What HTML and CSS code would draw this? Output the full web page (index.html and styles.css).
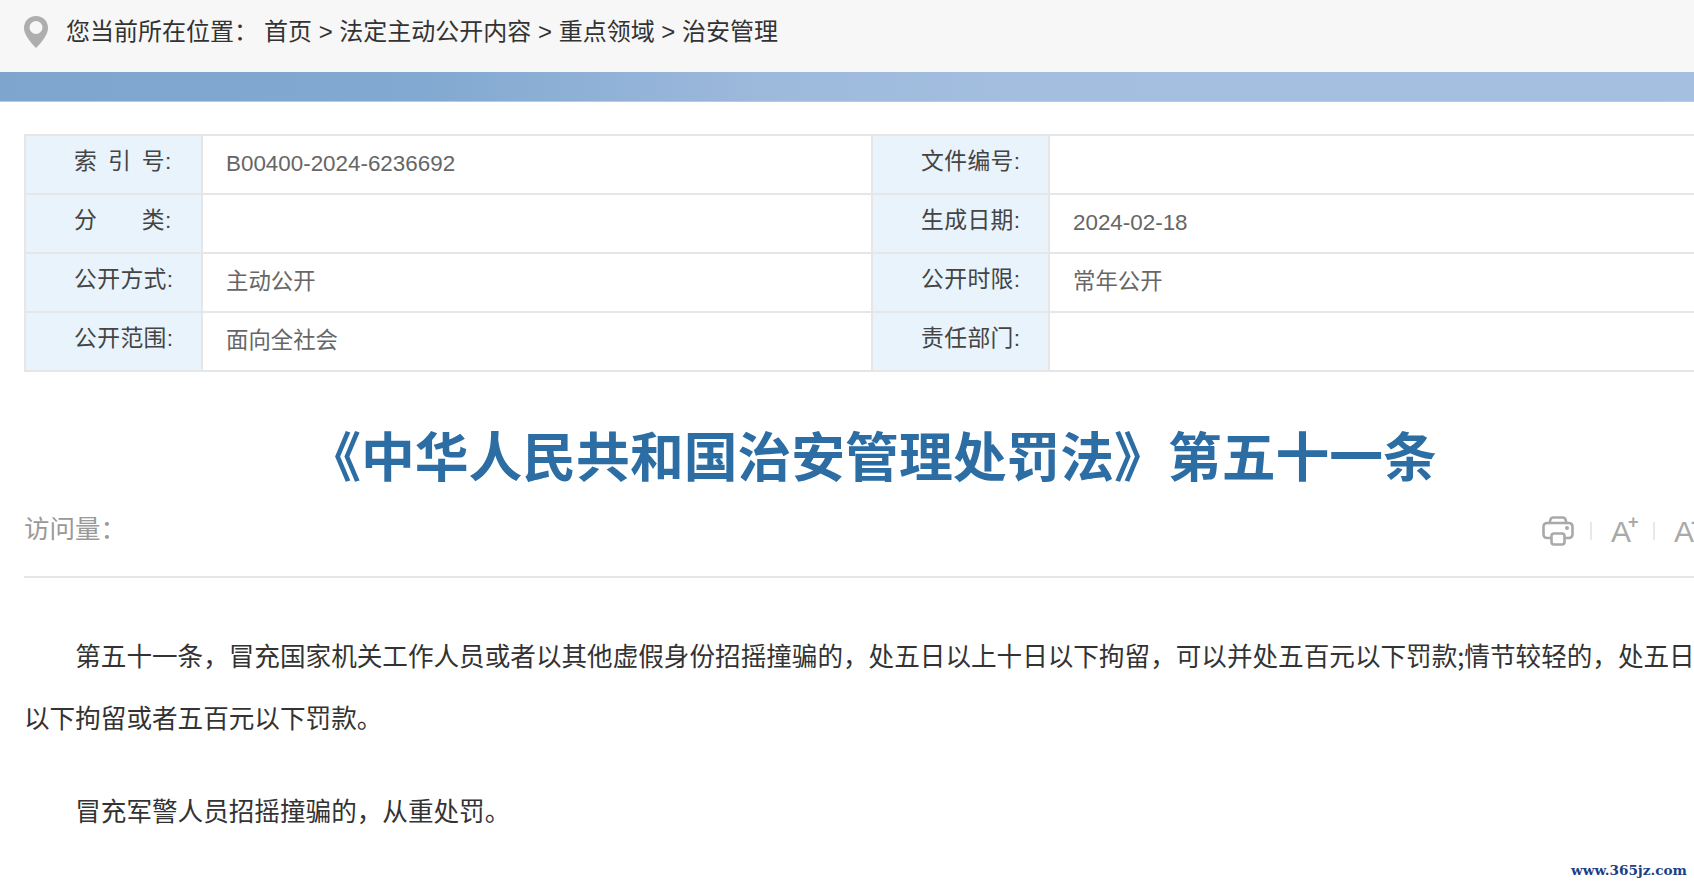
FILE: index.html
```html
<!DOCTYPE html>
<html lang="zh-CN">
<head>
<meta charset="utf-8">
<title>《中华人民共和国治安管理处罚法》第五十一条</title>
<link rel="stylesheet" href="styles.css">
</head>
<body>
<header class="crumb">
  <svg class="pin" viewBox="0 0 24 32" aria-hidden="true"><path d="M12 0C5 0 0 5.300 0 12c0 7 7 15 12 20 5-5 12-13 12-20C24 5.300 19 0 12 0z" fill="#aeaeae"/><circle cx="12" cy="11.500" r="6.500" fill="#f7f7f7"/></svg>
  <span class="crumb-label">您当前所在位置：</span>
  <span class="crumb-path">首页 &gt; 法定主动公开内容 &gt; 重点领域 &gt; 治安管理</span>
</header>
<div class="band"></div>
<main class="content">
  <section class="meta">
    <div class="k">索 引 号:</div><div class="v">B00400-2024-6236692</div>
    <div class="k">文件编号:</div><div class="v"></div>
    <div class="k">分&emsp;  类:</div><div class="v"></div>
    <div class="k">生成日期:</div><div class="v">2024-02-18</div>
    <div class="k">公开方式:</div><div class="v">主动公开</div>
    <div class="k">公开时限:</div><div class="v">常年公开</div>
    <div class="k">公开范围:</div><div class="v">面向全社会</div>
    <div class="k">责任部门:</div><div class="v"></div>
  </section>
  <h1 class="title">《中华人民共和国治安管理处罚法》第五十一条</h1>
  <div class="tools">
    <span class="visits">访问量：</span>
    <div class="actions">
      <svg class="ico-print" viewBox="0 0 32 30" aria-hidden="true"><g fill="none" stroke="#a9a9a9" stroke-width="2.600" stroke-linecap="round" stroke-linejoin="round"><path d="M8 22H5a3.500 3.500 0 0 1-3.500-3.500v-8A3.500 3.500 0 0 1 5 7h22a3.500 3.500 0 0 1 3.500 3.500v8A3.500 3.500 0 0 1 27 22h-3"/><path d="M7.500 7l1-3.500A3 3 0 0 1 11.500 1.500h9a3 3 0 0 1 3 2L24.500 7"/><rect x="9.500" y="17.500" width="13" height="11" rx="2.500"/></g><circle cx="25" cy="12" r="2" fill="#a9a9a9"/></svg>
      <i class="sep"></i>
      <span class="fs">A<sup>+</sup></span>
      <i class="sep"></i>
      <span class="fs">A<sup>-</sup></span>
    </div>
  </div>
  <article class="body">
    <p>第五十一条，冒充国家机关工作人员或者以其他虚假身份招摇撞骗的，处五日以上十日以下拘留，可以并处五百元以下罚款;情节较轻的，处五日以下拘留或者五百元以下罚款。</p>
    <p>冒充军警人员招摇撞骗的，从重处罚。</p>
  </article>
</main>
<div class="watermark">www.365jz.com</div>
</body>
</html>
```
FILE: styles.css
```css
* { box-sizing: border-box; }
html, body { margin: 0; padding: 0; height: 886px; overflow: hidden; background: #fff; }
body { font-family: "Liberation Sans", "Noto Sans CJK SC", sans-serif; color: #333; position: relative; }
.crumb {
  height: 72px; background: #f7f7f7; display: flex; align-items: flex-start;
  padding: 16px 0 0 24px; font-size: 24px; line-height: 32px; color: #333;
}
.pin { width: 24px; height: 32px; flex: none; margin-right: 18px; }
.crumb-label { margin-right: 6px; }
.band { height: 30px; background: linear-gradient(90deg, #7ea5ce 0%, #82a9d1 25%, #9db9dc 45%, #a3bedf 60%, #a5bfe0 100%); border-bottom: 1px solid #b4cbe6; }
.content { width: 1696px; margin-left: 24px; }
.meta {
  margin-top: 32px; display: grid; grid-template-columns: 177px 670px 177px 1fr;
  grid-auto-rows: 59px; border-top: 2px solid #e6e6e6; border-left: 2px solid #e6e6e6;
}
.k, .v { border-right: 2px solid #e6e6e6; border-bottom: 2px solid #e6e6e6; font-size: 22.400px; line-height: 30px; display: flex; align-items: center; white-space: pre; }
.k { background: #e8f3fc; color: #444; font-size: 22.800px; padding: 0 0 7px 48px; word-spacing: 4px; letter-spacing: .4px; }
.v { color: #666; padding: 0 0 1px 23px; }
.title {
  margin: 49px 0 0; text-align: center; font-size: 53.800px; line-height: 74px;
  font-weight: 700; color: #2c6da4; white-space: nowrap;
}
.tools {
  margin-top: 14px; height: 69px; border-bottom: 2px solid #e6e6e6;
  display: flex; align-items: flex-start; position: relative;
}
.visits { font-size: 25.500px; line-height: 38px; color: #999; margin-top: 1px; }
.actions { position: absolute; left: 1518px; top: 3px; display: flex; align-items: center; white-space: nowrap; }
.ico-print { width: 32px; height: 30px; flex: none; }
.sep { width: 2px; height: 18px; background: #e8e8e8; margin: 0 19px 0 16px; flex: none; }
.fs { font-size: 30px; line-height: 34px; color: #a9a9a9; display: flex; width: 26px; margin-top: 3px; }
.fs sup { font-size: 18px; line-height: 16px; font-weight: 700; margin: -1px 0 0 -3px; }
.body { padding-top: 46px; font-size: 25.600px; line-height: 62px; color: #333; font-family: "Noto Sans CJK SC", sans-serif; }
.body p { margin: 0 0 31px; text-indent: 2em; }
.watermark { position: absolute; left: 1571px; top: 859px; font-family: "DejaVu Serif", serif; font-size: 13.600px; line-height: 22px; font-weight: 700; color: #1b3f85; white-space: nowrap; }
```
